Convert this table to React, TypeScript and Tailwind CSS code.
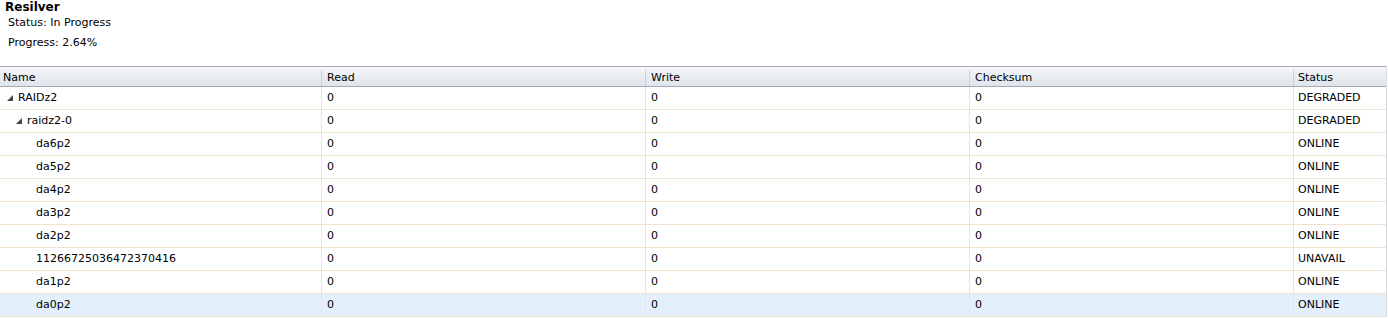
const rows = [
  { name: 'RAIDz2', level: 0, expander: true, status: 'DEGRADED' },
  { name: 'raidz2-0', level: 1, expander: true, status: 'DEGRADED' },
  { name: 'da6p2', level: 2, status: 'ONLINE' },
  { name: 'da5p2', level: 2, status: 'ONLINE' },
  { name: 'da4p2', level: 2, status: 'ONLINE' },
  { name: 'da3p2', level: 2, status: 'ONLINE' },
  { name: 'da2p2', level: 2, status: 'ONLINE' },
  { name: '11266725036472370416', level: 2, status: 'UNAVAIL' },
  { name: 'da1p2', level: 2, status: 'ONLINE' },
  { name: 'da0p2', level: 2, status: 'ONLINE', selected: true },
]

function Expander() {
  return (
    <svg width="6" height="6" viewBox="0 0 6 6" className="mr-[5px] shrink-0">
      <path d="M6 0 L6 6 L0 6 Z" fill="#444" />
    </svg>
  )
}

export default function App() {
  return (
    <div className="w-[1388px] h-[318px] bg-white text-[11px] text-black font-['DejaVu_Sans',sans-serif] overflow-hidden">
      <div className="pl-[5px] pt-[1px] text-[12px] font-bold leading-[12px]">Resilver</div>
      <div className="pl-[8px] pt-[3px] leading-[13px]">Status: In Progress</div>
      <div className="pl-[8px] pt-[7px] leading-[13px]">Progress: 2.64%</div>

      <div className="mt-[17px] w-[1387px] border-r border-[#d5dbe3]">
        <div className="flex h-[21px] pt-[3px] border-t border-b border-[#a7abb0] bg-gradient-to-b from-[#f4f6f9] to-[#dfe5ec]">
          <div className="w-[322px] pl-[3px] flex items-center border-r border-[#c9ced6]">Name</div>
          <div className="w-[324px] pl-[5px] flex items-center border-r border-[#c9ced6]">Read</div>
          <div className="w-[324px] pl-[5px] flex items-center border-r border-[#c9ced6]">Write</div>
          <div className="w-[324px] pl-[5px] flex items-center border-r border-[#c9ced6]">Checksum</div>
          <div className="flex-1 pl-[4px] flex items-center">Status</div>
        </div>
        {rows.map((r) => (
          <div
            key={r.name}
            className={`flex h-[23px] border-b border-[#f2e2d2] ${r.selected ? 'bg-[#e3effb]' : ''}`}
          >
            <div
              className={`w-[322px] flex items-center border-r border-[#f2e2d2] ${
                r.level === 0 ? 'pl-[7px]' : r.level === 1 ? 'pl-[16px]' : 'pl-[36px]'
              }`}
            >
              {r.expander && <Expander />}
              {r.name}
            </div>
            <div className="w-[324px] pl-[5px] flex items-center border-r border-[#f2e2d2]">0</div>
            <div className="w-[324px] pl-[5px] flex items-center border-r border-[#f2e2d2]">0</div>
            <div className="w-[324px] pl-[5px] flex items-center border-r border-[#f2e2d2]">0</div>
            <div className="flex-1 pl-[4px] flex items-center">{r.status}</div>
          </div>
        ))}
      </div>
    </div>
  )
}
